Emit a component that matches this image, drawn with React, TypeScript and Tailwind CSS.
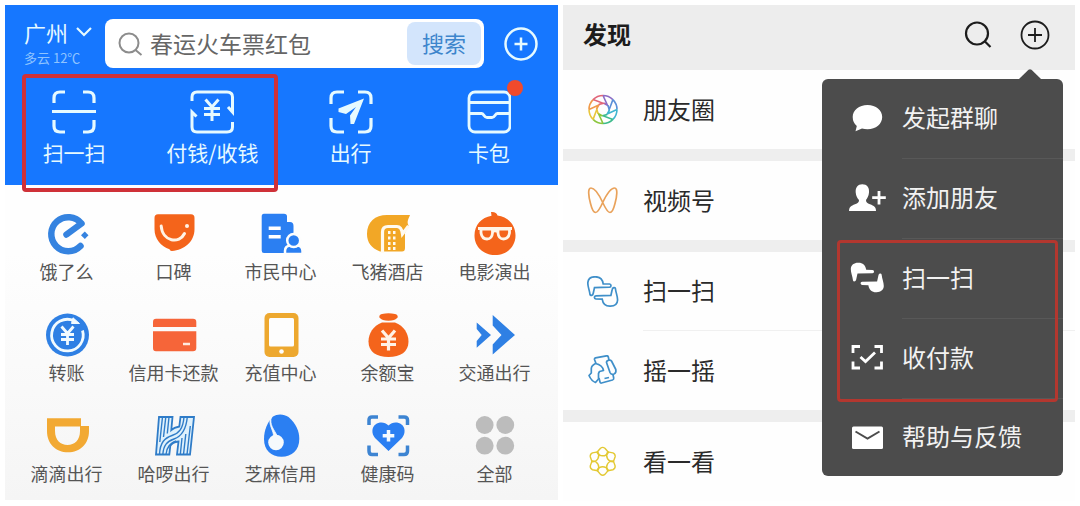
import { useState } from "react"
import type { ReactNode } from "react"

interface Entry {
  label: string
  icon: ReactNode
}

const BLUE = "#2b7ff2"
const ORANGE = "#f4641b"
const AMBER = "#f2a726"

const HAND =
  "M3 18.500C2.500 14 .8 11 .8 7C1 3 4 .8 8 .8C12.500 .6 15.500 3 16.200 7.800L22.500 8C24.500 8.300 24.500 11 22.500 11.200L7.500 11.600L6.200 17.500C5.800 19.800 3.300 20 3 18.500Z"

const Yen = () => <path d="M16.500 13.500L22.500 20.500L28.500 13.500M22.500 20.500V32M16 21.500H29M16 26.500H29" />

const actions: Entry[] = [
  {
    label: "扫一扫",
    icon: (
      <g fill="none" stroke="#e6faff" strokeWidth="3.2">
        <path d="M2 13V8Q2 2 8 2H13M31 2H36Q42 2 42 8V13M2 30V36Q2 42 8 42H13M31 42H36Q42 42 42 36V30M0 21.500H44" />
      </g>
    ),
  },
  {
    label: "付钱/收钱",
    icon: (
      <g fill="none" stroke="#e6faff" strokeWidth="3">
        <path d="M2 11V7Q2 2 7 2H37Q42.500 2 42.500 7V22L38 17" />
        <path d="M42.500 32V37Q42.500 42 37 42H7Q2 42 2 37V22L6.500 26.500" />
        <path d="M15.500 9.500L22 17L28.500 9.500M22 17V31M14 18.500H30M14 24.500H30" />
      </g>
    ),
  },
  {
    label: "出行",
    icon: (
      <g>
        <path
          d="M2 14V8Q2 2 8 2H15M29 2H36Q42 2 42 8V14M2 28V36Q2 42 8 42H15M29 42H36Q42 42 42 36V28"
          fill="none"
          stroke="#e6faff"
          strokeWidth="3.2"
        />
        <path d="M35 8.500L9.500 18.500V22L17 24L27 17L21 25.500L21.500 34H25Z" fill="#e6faff" />
      </g>
    ),
  },
  {
    label: "卡包",
    icon: (
      <g fill="none" stroke="#e6faff" strokeWidth="2.8">
        <rect x="2" y="2" width="41" height="40" rx="6" />
        <path d="M2 12.500H43M2 23.500H14.500C17 23.500 17 27.500 20 27.500H25C28 27.500 28 23.500 30.500 23.500H43" />
      </g>
    ),
  },
]

const services: Entry[] = [
  {
    label: "饿了么",
    icon: (
      <g>
        <path
          d="M35.500 34A17 17 0 1 1 36.500 11.500L21.500 22.500"
          fill="none"
          stroke="#3583e0"
          strokeWidth="6.500"
          strokeLinecap="round"
          strokeLinejoin="round"
        />
        <path d="M39.800 19.500L43.500 23.300L39.800 27L36 23.300Z" fill="#3583e0" />
      </g>
    ),
  },
  {
    label: "口碑",
    icon: (
      <g>
        <path d="M6 2.300H39Q42.500 2.300 42.500 6V17C42.500 30 32 38 20 39Q18 39.200 17.500 37.200C9 34.500 2.500 27 2.500 17V6Q2.500 2.300 6 2.300Z" fill={ORANGE} />
        <path d="M9.200 14C10.500 30 27.500 32 32.500 21.500" fill="none" stroke="#fff3e6" strokeWidth="3" strokeLinecap="round" />
        <circle cx="35" cy="14" r="2" fill="#fff3e6" />
      </g>
    ),
  },
  {
    label: "市民中心",
    icon: (
      <g>
        <path d="M5 1.700H25Q28 1.700 28 4.500V10H31Q34.500 10 34.500 14V41H5Q2.700 41 2.700 38.500V4.500Q2.700 1.700 5 1.700Z" fill={BLUE} />
        <path d="M9.700 16.300H21.700M9.700 24.700H21.700" stroke="#fff" strokeWidth="3.500" />
        <g fill={BLUE} stroke="#fdfdfd" strokeWidth="2.500">
          <path d="M26 42V39Q26 33.500 32 33.500H37.500Q43.500 33.500 43.500 39V42Z" />
          <circle cx="34.700" cy="28.500" r="6.500" />
        </g>
      </g>
    ),
  },
  {
    label: "飞猪酒店",
    icon: (
      <g>
        <path d="M44 3C42.500 7 40.500 9.500 42.500 13.500L39 21V36Q39 39.500 36 39.500H14C5 36 1 30 1 22C1 10 9 3 21 3Z" fill={AMBER} />
        <path d="M16.500 41V20Q16.500 14.500 22 14.500H31Q35.500 14.500 36.500 22L42.500 14" fill="none" stroke="#fffaf0" strokeWidth="3.200" />
        <path d="M22 20.500h2.500M27 20.500h2.500M22 26h2.500M27 26h2.500M22 31.500h2.500M27 31.500h2.500M22 36.500h2.500M27 36.500h2.500" stroke="#fffaf0" strokeWidth="3" />
      </g>
    ),
  },
  {
    label: "电影演出",
    icon: (
      <g>
        <path d="M18 0Q23.500 -.5 24.500 3.500C35 5 42.500 12.500 42.500 23.500C42.500 35 33.500 43 22 43S1.500 35 1.500 23.500C1.500 13 8.500 5.500 18.500 3.800Z" fill={ORANGE} />
        <g fill="none" stroke="#fff5e8" strokeWidth="2.800" strokeLinejoin="round">
          <path d="M8 17H19.500V21Q19 27 14 27T8 21Z" />
          <path d="M25 17H36.500V21Q35.500 27 30.500 27T25 21Z" />
          <path d="M5 16.500H39M19 19.500Q22 18 25 19.500" />
        </g>
      </g>
    ),
  },
  {
    label: "转账",
    icon: (
      <g>
        <circle cx="22.500" cy="22" r="21.500" fill="#2f80e4" />
        <g fill="none" stroke="#f2fbff" strokeWidth="2.800">
          <path d="M37.500 17.500A15.800 15.800 0 1 1 29 7.800" />
          <path d="M28 4.800L34.500 10.500L26.500 10.500Z" fill="#f2fbff" strokeWidth="1" />
          <Yen />
        </g>
      </g>
    ),
  },
  {
    label: "信用卡还款",
    icon: (
      <g>
        <path d="M4 5.700H41Q44.300 5.700 44.300 9V14H1V9Q1 5.700 4 5.700ZM1 18.300H44.300V35Q44.300 38.300 41 38.300H4Q1 38.300 1 35Z" fill="#f66539" />
        <path d="M31 31H38" stroke="#ffe9de" strokeWidth="2.500" />
      </g>
    ),
  },
  {
    label: "充值中心",
    icon: (
      <g>
        <rect x="5.500" width="34" height="44" rx="5" fill="#eda82f" />
        <rect x="10" y="5" width="25" height="28.500" rx="1.500" fill="#fdfdfd" />
        <circle cx="22.500" cy="38.500" r="2.300" fill="#fdfdfd" />
      </g>
    ),
  },
  {
    label: "余额宝",
    icon: (
      <g>
        <path d="M16 1Q22.500 -.5 29 1Q32.500 2 31.500 4.500Q29 7.800 22.500 7.800T13.500 4.500Q12.500 2 16 1Z" fill={ORANGE} />
        <path d="M16 9.500H29C38 13 42.500 20.500 42.500 28.500C42.500 39 34.500 44 22.500 44S2.500 39 2.500 28.500C2.500 20.500 7 13 16 9.500Z" fill={ORANGE} />
        <path d="M16 17.500L22.500 25L29 17.500M22.500 25V37.500M15 26H30M15 31.500H30" fill="none" stroke="#fff3e6" strokeWidth="3.200" />
      </g>
    ),
  },
  {
    label: "交通出行",
    icon: <path d="M3.700 9.500L18 22L3.700 34.800V28L8.700 22L3.700 16ZM19.700 2L42 22L19.700 41.500V31.500L28.500 22L19.700 12.500Z" fill="#2f80e4" />,
  },
  {
    label: "滴滴出行",
    icon: (
      <path
        d="M2 4.300H36V12H44V17C44 30 35 38.300 23 38.300S2 30 2 17ZM10 12.500V17C10 26 15.500 31 22.500 31S35 26 35 17V12.500Z"
        fill="#f2a933"
        fillRule="evenodd"
      />
    ),
  },
  {
    label: "哈啰出行",
    icon: (
      <g fill="none" stroke="#2f7cc8">
        <path
          d="M7 3H20.500L19.300 16Q22 13.500 27.300 12.500L28.500 3H42L38 40.500H25L26.500 27.500Q20 28 18.300 32L17.300 40.500H4Z"
          fill="#dff1fc"
          strokeWidth="1.800"
        />
        <path
          d="M10.500 3L7.800 28M13.800 3L11.500 23M17 3L15.300 19.500M7.500 40.500C8 28 13 24 20 21.500S31 15 32 3M10.800 40.500C11.500 31 15 27.500 22 25S34 17 35.300 3M14 40.500C14.500 33 18 29 24 27M35 40.500L38.300 12M31.500 40.500L33.800 20M28.300 40.500L30 24"
          strokeWidth="1.400"
        />
      </g>
    ),
  },
  {
    label: "芝麻信用",
    icon: (
      <g>
        <path d="M14 2.500C18 -.3 25 -.3 29.500 3C37 9.500 40.300 17 40.300 25C40.300 36 33 42.700 22.500 42.700S5 36 5 25C5 16 8.500 8 14 2.500Z" fill={BLUE} />
        <circle cx="17" cy="28.500" r="7.800" fill="#f5f9fc" />
        <path d="M12.500 2.500C10 11 15 15 18.500 22.500L14.500 22.500C15 17 9 11 11.500 3.500Z" fill="#f5f9fc" stroke="#f5f9fc" strokeWidth=".8" />
      </g>
    ),
  },
  {
    label: "健康码",
    icon: (
      <g>
        <path
          d="M3 11V6Q3 3 6 3H12M32.500 3H38Q41.500 3 41.500 6V11M3 31.500V37Q3 40.500 6 40.500H12M32.500 40.500H38Q41.500 40.500 41.500 37V31.500"
          fill="none"
          stroke="#3d84d2"
          strokeWidth="3.500"
        />
        <path d="M22.500 37L9 24C5 19 6 13 9.500 10.500C13.500 7.500 19 8 22.500 11.500C26 8 31.500 7.500 35.500 10.500C39 13 40 19 36 24Z" fill={BLUE} />
        <path d="M22.500 16V27.500M16.700 21.700H28.300" stroke="#f5fbff" strokeWidth="3.500" />
      </g>
    ),
  },
  {
    label: "全部",
    icon: (
      <g fill="#bcbcbc">
        <circle cx="11.700" cy="11" r="8.900" />
        <circle cx="32.300" cy="11" r="8.900" />
        <circle cx="11.700" cy="31.700" r="8.900" />
        <circle cx="32.300" cy="31.700" r="8.900" />
      </g>
    ),
  },
]

const shutterColors = ["#8d6cc4", "#5a8fd8", "#3fb5cf", "#3dbb8c", "#8cc63f", "#e8c63c", "#f09a4a", "#e0667a"]

// Eight identical blades turned round the centre of the lens
const Shutter = () => (
  <g fill="none" strokeWidth="1.600">
    {shutterColors.map((color, index) => (
      <path
        key={color}
        d="M16 1.500A14 14 0 0 1 25.900 5.600M16 1.500L20.500 11.300L16.500 9"
        stroke={color}
        transform={`rotate(${index * 45} 16 15.500)`}
      />
    ))}
  </g>
)

const discoverGroups: Entry[][] = [
  [{ label: "朋友圈", icon: <Shutter /> }],
  [
    {
      label: "视频号",
      icon: (
        <path
          d="M15.700 17.500C12 9.500 7.500 3 4 3C.5 3 1.500 11 3.500 18.500C5 24.500 6.500 27.500 8.500 27.500C11 27.500 13.500 22.500 15.700 17.500C19.500 9.500 24 3 27.500 3C31 3 30 11 28 18.500C26.500 24.500 25 27.500 23 27.500C20.500 27.500 18 22.500 15.700 17.500Z"
          fill="none"
          stroke="#e9a25b"
          strokeWidth="1.700"
        />
      ),
    },
  ],
  [
    {
      label: "扫一扫",
      icon: (
        <g fill="none" stroke="#3f8fc9" strokeWidth="1.700">
          <path d={HAND} />
          <path d={HAND} transform="rotate(180 15.700 15.500)" />
        </g>
      ),
    },
    {
      label: "摇一摇",
      icon: (
        <g fill="none" stroke="#3f8fc9" strokeWidth="1.700" strokeLinejoin="round">
          <path d="M9 8.500L7.500 4.500Q7.300 3.200 8.500 2.900L19.500 .8Q21 .6 21.300 2L22 5" />
          <path d="M19.500 7.500Q19.500 5.500 21.500 5.300Q23.500 4.800 24.500 6L28.800 14.500Q29.500 18 27 19Q24 20 23 17.500Z" />
          <path d="M8.500 8.500Q4.500 10.500 4.300 13.500V18L2 20.500Q4.500 26 8.500 27.500L11.500 24V18.500L12.500 16.500L16.500 15.500Q15.500 10 8.500 8.500Z" />
          <path d="M12 23L13 27Q13.300 28.300 14.500 28L25.500 25Q27 24.500 26.700 23L26 19.500M17.500 23.500L22 22.500" />
        </g>
      ),
    },
  ],
  [
    {
      label: "看一看",
      icon: (
        <g fill="none" stroke="#e3c933" strokeWidth="1.400" strokeLinejoin="round">
          {[0, 60, 120, 180, 240, 300].map((angle) => (
            <path
              key={angle}
              d="M10 6.300L13.500 2.200Q15.700 .6 17.900 2.200L21.400 6.300Q19.500 9.800 15.700 9.800Q12 9.800 10 6.300Z"
              transform={`rotate(${angle} 15.700 15.300)`}
            />
          ))}
        </g>
      ),
    },
  ],
]

const menuItems: Entry[] = [
  {
    label: "发起群聊",
    icon: <path d="M19.500 5C28 5 34.200 10 34.200 17S28 29.300 19.500 29.300Q16.500 29.300 14 28.600L7.500 31.200L8.800 26Q4.700 22.500 4.700 17C4.700 10 11 5 19.500 5Z" />,
  },
  {
    label: "添加朋友",
    icon: (
      <g>
        <path d="M14.300 4.300C19 4.300 21.500 7.500 21 12.500C20.800 16 19 18.500 18 20C18 22.500 19 23 22 24.200C26 25.800 28 27 28 31H1C1 27 3 25.800 7 24.200C10 23 11 22.500 11 20C9.500 18.500 8 16 7.700 12.500C7.300 7.500 9.800 4.300 14.300 4.300Z" />
        <path d="M31 11V24.500M24.200 17.700H37.800" stroke="#fff" strokeWidth="2.800" />
      </g>
    ),
  },
  {
    label: "扫一扫",
    icon: (
      <g>
        <path d={HAND} transform="translate(2 2)" />
        <path d={HAND} transform="rotate(180 18.300 16.500)" />
      </g>
    ),
  },
  {
    label: "收付款",
    icon: (
      <path
        d="M5 13V6.500H12M26.500 6.500H33.500V13M5 21.500V28H12M26.500 28H33.500V21.500M12.500 17L17.500 21.500L27 12.500"
        fill="none"
        stroke="#fff"
        strokeWidth="2.800"
      />
    ),
  },
  {
    label: "帮助与反馈",
    icon: (
      <g>
        <rect x="4" y="7.500" width="31" height="22.500" rx="1.500" />
        <path d="M7.500 12.500L19.500 19.500L31.500 12.500" fill="none" stroke="#4c4c4c" strokeWidth="2" />
      </g>
    ),
  },
]

const WalletPanel = () => {
  const [query, setQuery] = useState("")

  return (
    <section className="flex flex-col bg-gradient-to-b from-[#fefefe] from-50% to-[#f5f5f5]">
      <header className="relative bg-[#1677ff] pb-[19px] pt-[14px] text-[#e6faff]">
        <div className="flex items-start pl-[19px] pr-5">
          <div className="flex w-[81px] shrink-0 flex-col items-start gap-1">
            <button type="button" className="flex items-center gap-2 text-[22px] leading-[26px]">
              广州
              <svg className="h-3 w-4" viewBox="0 0 16 12" fill="none" stroke="currentColor" strokeWidth="2.200">
                <path d="M1 2L8 9L15 2" />
              </svg>
            </button>
            <p className="text-[13px] leading-[18px] text-[#8fc4ff]">多云 12℃</p>
          </div>
          <form
            className="flex min-w-0 flex-1 items-stretch rounded-lg bg-white p-[3px]"
            onSubmit={(event) => event.preventDefault()}
          >
            <label htmlFor="wallet-search" className="flex items-center pl-2">
              <svg className="size-7" viewBox="0 0 28 28" fill="none" stroke="#8c8c8c" strokeWidth="2" aria-label="搜索">
                <circle cx="13" cy="13" r="9.500" />
                <path d="M19.500 20L25.500 25" />
              </svg>
            </label>
            <input
              id="wallet-search"
              type="text"
              value={query}
              onChange={(event) => setQuery(event.target.value)}
              placeholder="春运火车票红包"
              className="h-[43px] min-w-0 flex-1 pb-[2px] pl-[6px] text-[23px] text-[#555] outline-none placeholder:text-[#666]"
            />
            <button type="submit" className="w-[74px] rounded-lg bg-[#d3e5fc] pb-[2px] text-[22px] text-[#3d85cc]">
              搜索
            </button>
          </form>
          <button type="button" aria-label="更多" className="ml-5 self-center">
            <svg className="size-[34px]" viewBox="0 0 34 34" fill="none" stroke="currentColor" strokeWidth="2.500">
              <circle cx="17" cy="17" r="15.500" />
              <path d="M17 10.500V23.500M10.500 17H23.500" />
            </svg>
          </button>
        </div>
        <nav className="mt-[22px] grid grid-cols-4">
          {actions.map((action) => (
            <a key={action.label} href="#" className="flex flex-col items-center gap-1">
              <span className="relative">
                <svg className="size-11" viewBox="0 0 44 44">
                  {action.icon}
                </svg>
                {action.label === "卡包" && (
                  <span className="absolute -right-3 -top-[10px] size-4 rounded-full bg-[#f04a2c]" />
                )}
              </span>
              <span className="text-[21px] leading-7">{action.label}</span>
            </a>
          ))}
        </nav>
        <div className="pointer-events-none absolute -bottom-[7px] left-[17px] right-1/2 top-[69px] mr-1 rounded border-4 border-[#cf3138]" />
      </header>
      <nav className="grid grid-cols-5 gap-y-[30px] pb-[15px] pl-2 pr-[10px] pt-[27px]">
        {services.map((service) => (
          <a key={service.label} href="#" className="flex flex-col items-center gap-[3px]">
            <svg className="size-11 overflow-visible" viewBox="0 0 44 44">
              {service.icon}
            </svg>
            <span className="whitespace-nowrap text-[18px] leading-6 text-[#555]">{service.label}</span>
          </a>
        ))}
      </nav>
    </section>
  )
}

const PlusMenu = () => (
  <div className="absolute right-3 top-[74px] w-[241px] rounded-md bg-[#4c4c4c] text-[#f2f2f2]">
    <svg className="absolute -top-[10px] right-[22px] h-[10px] w-[22px]" viewBox="0 0 22 10" fill="#4c4c4c">
      <path d="M0 10L9.500 .8Q11 -.3 12.500 .8L22 10Z" />
    </svg>
    <ul>
      {menuItems.map((item) => (
        <li key={item.label} className="group">
          <button type="button" className="flex h-20 w-full items-stretch gap-4 pl-[26px] group-last:h-[77px]">
            <svg className="size-[38px] self-center" viewBox="0 0 38 38" fill="#fff">
              {item.icon}
            </svg>
            <span className="flex flex-1 items-center border-b border-[#585858] pb-[3px] text-2xl group-last:border-0">
              {item.label}
            </span>
          </button>
        </li>
      ))}
    </ul>
    <div className="pointer-events-none absolute left-[15px] right-[5px] top-[161px] h-[162px] rounded-sm border-[3px] border-[#b3372f]" />
  </div>
)

const DiscoverPanel = () => {
  const [menuOpen, setMenuOpen] = useState(true)

  return (
    <section className="relative bg-[#eeeeee] text-[#2a2a2a]">
      <header className="flex h-[65px] items-center bg-[#ededed] pb-[5px] pl-5 pr-6">
        <h1 className="flex-1 pb-[2px] text-2xl font-bold text-[#1c1c1c]">发现</h1>
        <div className="flex gap-[25px] text-[#1c1c1c]">
          <button type="button" aria-label="搜索">
            <svg className="size-8" viewBox="0 0 32 32" fill="none" stroke="currentColor" strokeWidth="2.200">
              <circle cx="15" cy="14.500" r="11" />
              <path d="M22.500 22L28.500 28" />
            </svg>
          </button>
          <button type="button" aria-label="添加" aria-expanded={menuOpen} onClick={() => setMenuOpen(!menuOpen)}>
            <svg className="size-8" viewBox="0 0 32 32" fill="none" stroke="currentColor" strokeWidth="1.800">
              <circle cx="16" cy="16" r="13.500" />
              <path d="M16 9V23M9 16H23" />
            </svg>
          </button>
        </div>
      </header>
      <div className="flex flex-col gap-3">
        {discoverGroups.map((group) => (
          <ul key={group[0].label} className="bg-[#fefefe]">
            {group.map((entry) => (
              <li key={entry.label} className="group">
                <a href="#" className="flex h-[79px] items-stretch gap-6 pl-6">
                  <svg className="size-8 self-center" viewBox="0 0 32 32">
                    {entry.icon}
                  </svg>
                  <span className="flex flex-1 items-center border-b border-[#f0f0f0] pb-[2px] text-2xl group-last:border-0">
                    {entry.label}
                  </span>
                </a>
              </li>
            ))}
          </ul>
        ))}
      </div>
      {menuOpen && <PlusMenu />}
    </section>
  )
}

export default function App() {
  return (
    <main className="grid grid-cols-[553fr_512fr] items-start gap-[5px] bg-white p-[5px] font-['Noto_Sans_CJK_SC',sans-serif]">
      <WalletPanel />
      <DiscoverPanel />
    </main>
  )
}
